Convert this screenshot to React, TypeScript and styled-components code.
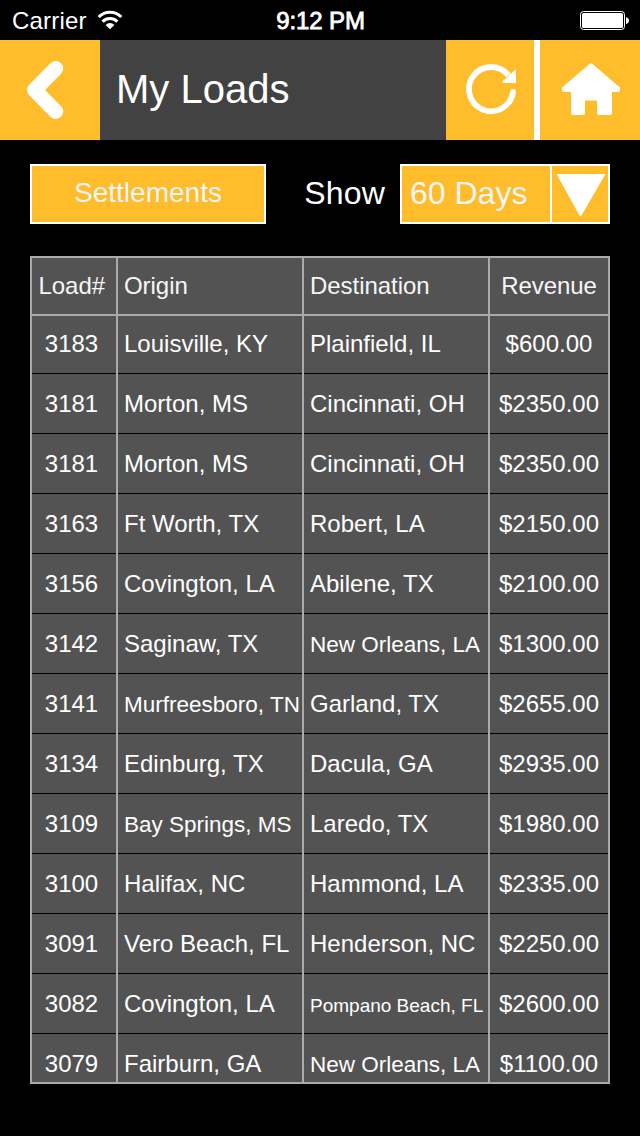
import React from 'react';
import styled, { createGlobalStyle } from 'styled-components';

const amber = '#ffbc2b';
const line = '#aaaaaa';
const panel = '#535353';

const GlobalStyle = createGlobalStyle`
  * { box-sizing: border-box; }
  body {
    margin: 0;
    background: #000;
    color: #fff;
    font-family: "Liberation Sans", Helvetica, Arial, sans-serif;
  }
  button { font: inherit; margin: 0; padding: 0; border: 0; border-radius: 0; }
`;

const Screen = styled.div`
  width: 640px;
  height: 1136px;
  overflow: hidden;
  background: #000;
`;

const StatusBar = styled.div`
  display: grid;
  grid-template-columns: 1fr auto 1fr;
  align-items: center;
  height: 40px;
  padding: 1px 11px 0 12px;
  font-size: 24px;
`;

const Carrier = styled.div`
  display: flex;
  align-items: center;
  gap: 10px;
  letter-spacing: 0.2px;
  svg { margin-bottom: 2px; }
`;

const Clock = styled.div`
  -webkit-text-stroke: 0.8px #fff;
  letter-spacing: -0.1px;
`;

const Battery = styled.svg`
  display: block;
  justify-self: end;
`;

const NavBar = styled.header`
  display: flex;
  height: 100px;
  background: #424242;
`;

const NavButton = styled.button<{ $width: number; $divider?: boolean }>`
  display: block;
  width: ${(p) => p.$width}px;
  height: 100px;
  background: ${amber};
  border-right: ${(p) => (p.$divider ? '6px solid #fff' : '0')};
  svg { display: block; }
`;

const Title = styled.h1`
  flex: 1;
  margin: 0;
  padding-left: 16px;
  font-size: 40px;
  font-weight: 400;
  line-height: 98px;
`;

const Toolbar = styled.div`
  display: flex;
  align-items: center;
  height: 60px;
  margin: 24px 30px 32px;
`;

const SettlementsButton = styled.button`
  width: 236px;
  height: 60px;
  padding-bottom: 2px;
  border: 2px solid #fff;
  background: ${amber};
  color: #f5f5f8;
  font-size: 28px;
`;

const ShowLabel = styled.span`
  flex: 1;
  padding: 0 15px 2px 0;
  text-align: right;
  font-size: 32px;
  letter-spacing: 0.2px;
`;

const Select = styled.button`
  display: flex;
  width: 210px;
  height: 60px;
  border: 2px solid #fff;
  background: ${amber};
  color: #f5f5f8;
  font-size: 32px;
  line-height: 54px;
  text-align: left;
`;

const SelectValue = styled.span`
  flex: 1;
  height: 56px;
  padding-left: 8px;
  border-right: 2px solid #fff;
`;

const Table = styled.div`
  width: 580px;
  height: 828px;
  margin: 0 30px;
  border: 2px solid ${line};
  background: ${line};
  overflow: hidden;
`;

const Row = styled.div<{ $height?: number }>`
  display: grid;
  grid-template-columns: 84px 184px 184px 118px;
  grid-template-rows: 100%;
  column-gap: 2px;
  height: ${(p) => p.$height ?? 60}px;
`;

const HeaderRow = styled(Row)`
  height: 56px;
  margin-bottom: 2px;
`;

const HeaderCell = styled.div<{ $center?: boolean; $indent?: number }>`
  padding-left: ${(p) => p.$indent ?? (p.$center ? 0 : 6)}px;
  background: ${panel};
  color: #f6f6f6;
  font-size: 24px;
  line-height: 55px;
  letter-spacing: -0.05px;
  text-align: ${(p) => (p.$center ? 'center' : 'left')};
`;

const lineHeights: Record<number, number> = { 24: 59, 22.5: 57, 19: 55 };

const Cell = styled.div<{ $align?: 'id' | 'place' | 'money'; $size?: number }>`
  display: flex;
  align-items: flex-end;
  justify-content: ${(p) => (p.$align === 'place' ? 'flex-start' : 'center')};
  padding-left: ${(p) => (p.$align === 'place' ? 6 : 0)}px;
  padding-right: ${(p) => (p.$align === 'id' ? 5 : 0)}px;
  background: ${panel};
  border-bottom: 1px solid #000;
  font-size: ${(p) => p.$size ?? 24}px;
  line-height: ${(p) => lineHeights[p.$size ?? 24]}px;
  white-space: nowrap;
`;

type Place = { name: string; size?: number };
type Load = { id: string; origin: Place; destination: Place; revenue: string };

const loads: Load[] = [
  { id: '3183', origin: { name: 'Louisville, KY' }, destination: { name: 'Plainfield, IL' }, revenue: '$600.00' },
  { id: '3181', origin: { name: 'Morton, MS' }, destination: { name: 'Cincinnati, OH' }, revenue: '$2350.00' },
  { id: '3181', origin: { name: 'Morton, MS' }, destination: { name: 'Cincinnati, OH' }, revenue: '$2350.00' },
  { id: '3163', origin: { name: 'Ft Worth, TX' }, destination: { name: 'Robert, LA' }, revenue: '$2150.00' },
  { id: '3156', origin: { name: 'Covington, LA' }, destination: { name: 'Abilene, TX' }, revenue: '$2100.00' },
  { id: '3142', origin: { name: 'Saginaw, TX' }, destination: { name: 'New Orleans, LA', size: 22.5 }, revenue: '$1300.00' },
  { id: '3141', origin: { name: 'Murfreesboro, TN', size: 22.5 }, destination: { name: 'Garland, TX' }, revenue: '$2655.00' },
  { id: '3134', origin: { name: 'Edinburg, TX' }, destination: { name: 'Dacula, GA' }, revenue: '$2935.00' },
  { id: '3109', origin: { name: 'Bay Springs, MS', size: 22.5 }, destination: { name: 'Laredo, TX' }, revenue: '$1980.00' },
  { id: '3100', origin: { name: 'Halifax, NC' }, destination: { name: 'Hammond, LA' }, revenue: '$2335.00' },
  { id: '3091', origin: { name: 'Vero Beach, FL' }, destination: { name: 'Henderson, NC' }, revenue: '$2250.00' },
  { id: '3082', origin: { name: 'Covington, LA' }, destination: { name: 'Pompano Beach, FL', size: 19 }, revenue: '$2600.00' },
  { id: '3079', origin: { name: 'Fairburn, GA' }, destination: { name: 'New Orleans, LA', size: 22.5 }, revenue: '$1100.00' },
];

const WifiIcon = () => (
  <svg width="26" height="20" viewBox="0 0 26 20" fill="none" stroke="#fff" strokeWidth="3">
    <path d="M1.7 7a16 16 0 0 1 22.600 0" />
    <path d="M5.600 11.600a10.500 10.500 0 0 1 14.800 0" />
    <path d="M13 19.300 L8.600 14.900a6.200 6.200 0 0 1 8.800 0z" fill="#fff" stroke="none" />
  </svg>
);

export default function App() {
  return (
    <>
      <GlobalStyle />
      <Screen>
        <StatusBar>
          <Carrier>
            <span>Carrier</span>
            <WifiIcon />
          </Carrier>
          <Clock>9:12 PM</Clock>
          <Battery width="49" height="20" viewBox="0 0 49 20">
            <rect x="0.5" y="0.5" width="44" height="18" rx="3" fill="none" stroke="#fff" />
            <rect x="2" y="2" width="41" height="15" rx="1.5" fill="#fff" />
            <path d="M46 6.200c4 .6 4 6.200 0 6.800z" fill="#fff" />
          </Battery>
        </StatusBar>

        <NavBar>
          <NavButton $width={100} aria-label="Back">
            <svg width="100" height="100" viewBox="0 0 100 100" fill="none" stroke="#fff" strokeWidth="15" strokeLinecap="round" strokeLinejoin="round">
              <path d="M55.700 28.500 L34.500 50 L55.700 71.500" />
            </svg>
          </NavButton>
          <Title>My Loads</Title>
          <NavButton $width={94} $divider aria-label="Refresh">
            <svg width="88" height="100" viewBox="0 0 88 100" fill="none">
              <path d="M67 51.800 A22.100 22.100 0 1 1 62.500 35.500" stroke="#fff" strokeWidth="5.800" />
              <circle cx="67" cy="51.800" r="2.900" fill="#fff" />
              <path d="M69.200 29.700 Q70 29.500 70 30.500 V43 H57.500 Q55.800 42 57 40.500 L61 37.500 L64.500 34z" fill="#fff" />
            </svg>
          </NavButton>
          <NavButton $width={100} aria-label="Home">
            <svg width="100" height="100" viewBox="0 0 100 100" fill="#fff">
              <path d="M51 22.700 L80 47.500 V50 Q80 52 78 52 H72 V73 Q72 75 70 75 H59 Q57 75 57 73 V60.500 H45 V73 Q45 75 43 75 H33 Q31 75 31 73 V52 H24 Q22 52 22 50 V47.500z" />
            </svg>
          </NavButton>
        </NavBar>

        <Toolbar>
          <SettlementsButton>Settlements</SettlementsButton>
          <ShowLabel>Show</ShowLabel>
          <Select>
            <SelectValue>60 Days</SelectValue>
            <svg width="56" height="56" viewBox="0 0 56 56">
              <path d="M4.500 8 H53.500 L29.500 49.500 H27.500z" fill="#fff" />
            </svg>
          </Select>
        </Toolbar>

        <Table>
          <HeaderRow>
            <HeaderCell $indent={6.5}>Load#</HeaderCell>
            <HeaderCell>Origin</HeaderCell>
            <HeaderCell>Destination</HeaderCell>
            <HeaderCell $center>Revenue</HeaderCell>
          </HeaderRow>
          {loads.map((load, i) => (
            <Row key={i} $height={i === 0 ? 58 : 60}>
              <Cell $align="id">{load.id}</Cell>
              <Cell $align="place" $size={load.origin.size}>{load.origin.name}</Cell>
              <Cell $align="place" $size={load.destination.size}>{load.destination.name}</Cell>
              <Cell $align="money">{load.revenue}</Cell>
            </Row>
          ))}
        </Table>
      </Screen>
    </>
  );
}
